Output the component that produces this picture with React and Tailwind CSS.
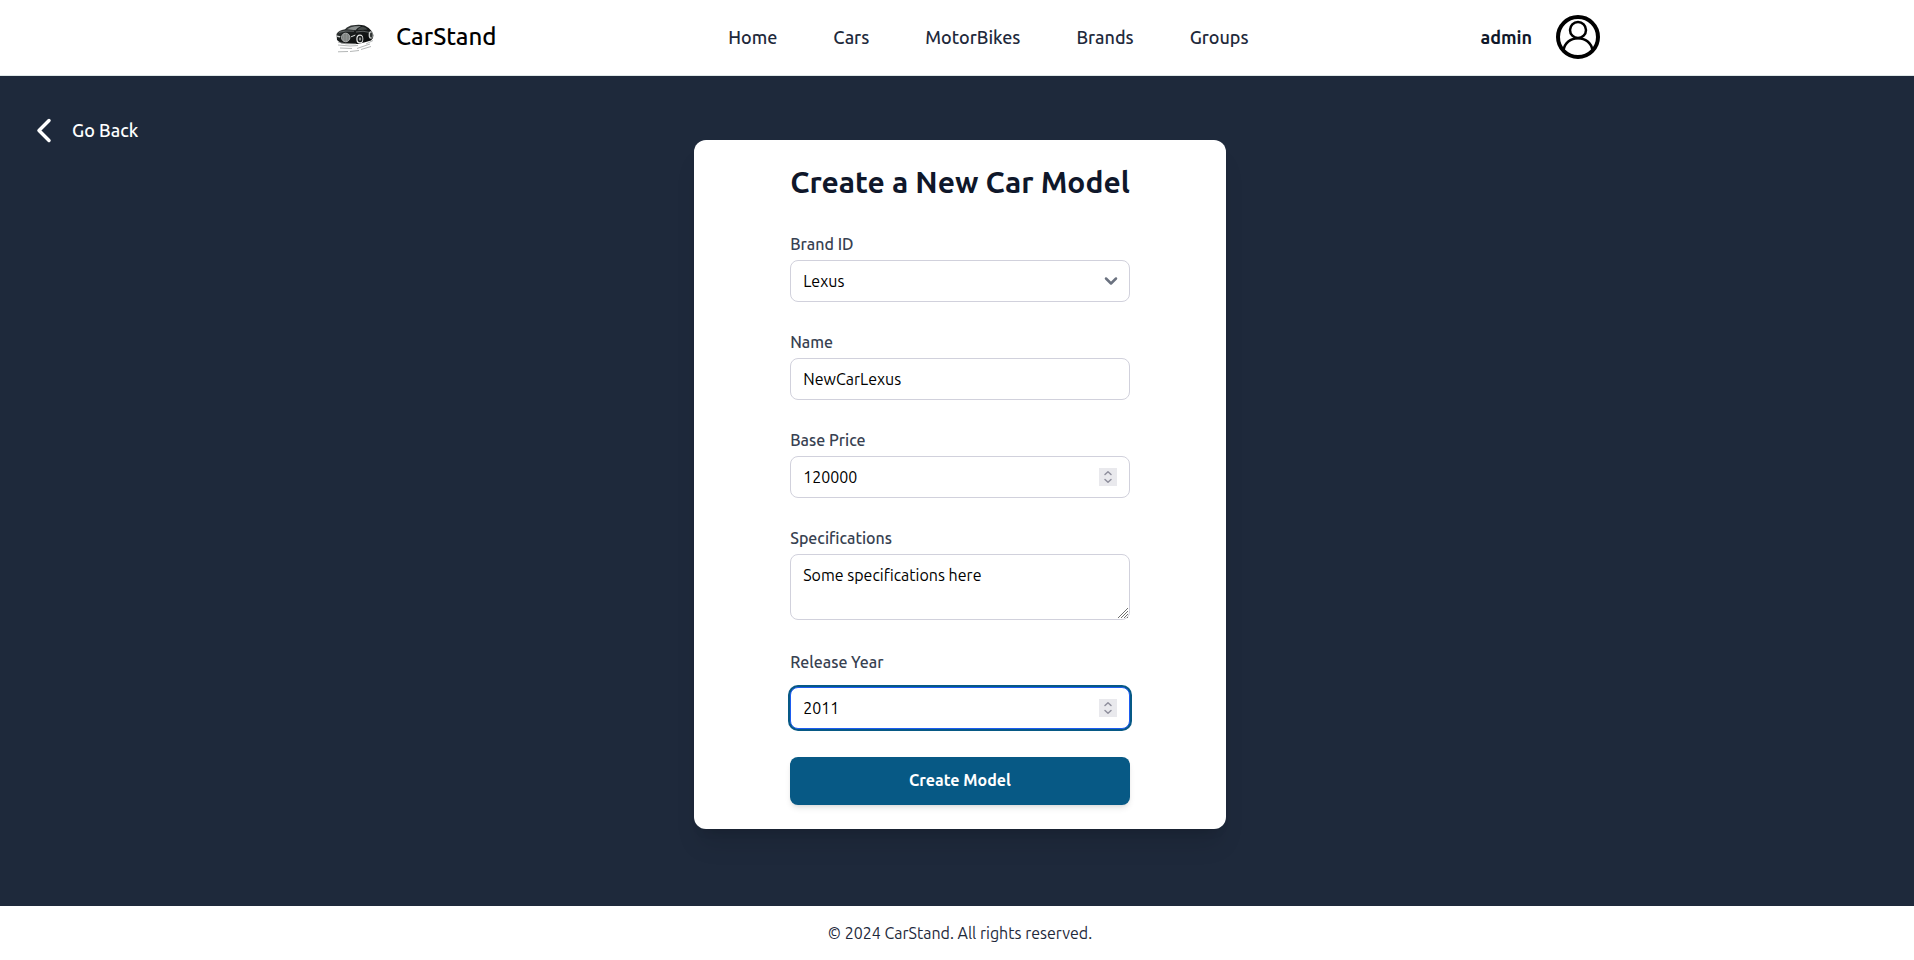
import { useState } from "react";

const NAV_LINKS = ["Home", "Cars", "MotorBikes", "Brands", "Groups"];
const BRANDS = ["Lexus", "Toyota", "BMW", "Audi"];

const fieldClass =
  "block w-full rounded-lg border border-[#d1d1dc] bg-white px-3 py-2 text-base text-black outline-none";
const focusedClass =
  "block w-full rounded-lg border border-[#1d5cf0] bg-white px-3 py-2 text-base text-black outline-none ring-2 ring-[#075985]";
const labelClass = "block text-base font-medium text-[#374151]";

function CarLogo() {
  return (
    <svg viewBox="0 0 50 42" className="h-[42px] w-[50px]" aria-hidden="true">
      <defs>
        <linearGradient id="body" x1="0" y1="0" x2="1" y2="1">
          <stop offset="0" stopColor="#5b605f" />
          <stop offset="0.35" stopColor="#1b1f1f" />
          <stop offset="1" stopColor="#050606" />
        </linearGradient>
      </defs>
      <path d="M8 29 L20 30 L28 29.500 M10 32 L22 32.500 M8 35.800 L18 35.500 M20 35.500 L29 34.500 M27 32.500 L40 28 M31 33.500 L41 30.500 M36 28 L43 24.500" stroke="#b4b7b7" strokeWidth="1" fill="none" />
      <path d="M6.500 18 Q8 14.500 15 13.200 Q18.500 9.500 23 9.200 Q30 8.200 34.500 9.600 Q39 11.500 42 15.500 Q44 18.500 43 22 L41 24.500 L34 26.500 L28 28 L11 27.200 L7 24 Z" fill="url(#body)" />
      <path d="M17 13.200 Q20.500 10.500 25 10.200 L31 10 Q27 12 25.500 14.200 Z" fill="#8b908f" />
      <path d="M27.500 14.200 Q29 11.200 33 10.800 Q36 11.500 37.500 13.600 Z" fill="#454a49" />
      <path d="M9 16.300 Q15 14.400 24 15.200 M26 16 Q33 14.300 40 16.500" stroke="#8f9493" strokeWidth="0.600" fill="none" />
      <path d="M7 19.500 L10.500 20.300 L10 21.500 L7.200 21 Z M21 20.300 L25.500 18.500 L25 19.800 L21.200 21.300 Z" fill="#d3d6d5" />
      <ellipse cx="15.700" cy="21.500" rx="4.200" ry="4.300" fill="#777b7a" stroke="#c8cac9" strokeWidth="0.800" />
      <path d="M13.500 18.500 V24.500 M15 18 V25.200 M16.500 18 V25.200 M18 18.500 V24.500" stroke="#a5a8a7" strokeWidth="0.500" />
      <ellipse cx="29.800" cy="23" rx="3.500" ry="4.500" fill="#eceeed" />
      <ellipse cx="30" cy="23" rx="2.500" ry="3.300" fill="#131616" />
      <ellipse cx="30" cy="23" rx="1.200" ry="1.800" fill="#8d9190" />
      <ellipse cx="40.800" cy="19" rx="2.200" ry="3.700" fill="#c9cccb" />
      <ellipse cx="41.300" cy="19" rx="1.400" ry="2.700" fill="#323635" />
      <path d="M8 26 Q15 28.800 26 27.800" stroke="#888c8b" strokeWidth="0.700" fill="none" />
    </svg>
  );
}

function Avatar() {
  return (
    <svg viewBox="0 0 44 44" className="size-11" fill="none" stroke="#000" aria-hidden="true">
      <circle cx="22" cy="22" r="20" strokeWidth="4" />
      <circle cx="22" cy="15" r="8" strokeWidth="2.500" />
      <path d="M7.500 35.500 C8.500 28 14.500 23.300 22 23.300 C29.500 23.300 35.500 28 36.500 35.500" strokeWidth="2.500" />
    </svg>
  );
}

function NumberField({ id, className, value, onChange }) {
  return (
    <div className="relative">
      <input
        id={id}
        type="number"
        value={value}
        onChange={onChange}
        className={`${className} [appearance:textfield] [&::-webkit-inner-spin-button]:appearance-none [&::-webkit-outer-spin-button]:appearance-none`}
      />
      <svg
        viewBox="0 0 18 18"
        className="pointer-events-none absolute right-[13px] top-3 size-[18px] bg-[#e9e9ed]"
        fill="none"
        stroke="#8f8f9d"
        strokeWidth="1.500"
        strokeLinecap="round"
        strokeLinejoin="round"
        aria-hidden="true"
      >
        <path d="M6 6.500 L9 3.800 L12 6.500 M6 11.500 L9 14.200 L12 11.500" />
      </svg>
    </div>
  );
}

export default function App() {
  const [brand, setBrand] = useState("Lexus");
  const [name, setName] = useState("NewCarLexus");
  const [price, setPrice] = useState("120000");
  const [specs, setSpecs] = useState("Some specifications here");
  const [year, setYear] = useState("2011");

  return (
    <div className="flex min-h-screen flex-col bg-white font-['Ubuntu','Noto_Sans',sans-serif] text-base">
      <header className="border-b border-[#dfe8e8] bg-white pl-1.5">
        <div className="mx-auto flex h-[75px] max-w-[1280px] items-center justify-between pb-0.5">
          <a href="#" className="flex items-center gap-4 pl-2.5 text-2xl font-medium text-black">
            <CarLogo />
            CarStand
          </a>
          <nav className="flex items-center gap-14">
            {NAV_LINKS.map((link) => (
              <a key={link} href="#" className="text-lg font-medium text-[#1e293b]">
                {link}
              </a>
            ))}
          </nav>
          <a href="#" className="flex items-center gap-6 text-lg font-semibold text-[#0f172a]">
            admin
            <Avatar />
          </a>
        </div>
      </header>

      <main className="relative flex flex-1 flex-col items-center bg-[#1e293b] py-16 pl-1.5">
        <button type="button" className="absolute left-8 top-10 flex items-center gap-4 text-lg font-medium text-white">
          <svg viewBox="0 0 24 28" className="h-7 w-6" fill="none" stroke="currentColor" strokeWidth="3.500" strokeLinecap="round" strokeLinejoin="round" aria-hidden="true">
            <path d="M17 4.500 L7 14.500 L17 24.500" />
          </svg>
          Go Back
        </button>

        <form
          className="flex w-fit flex-col rounded-xl bg-white px-24 py-6 shadow-xl"
          onSubmit={(e) => e.preventDefault()}
        >
          <h1 className="mb-8 text-center text-3xl font-semibold leading-9 text-[#0f172a]">Create a New Car Model</h1>

          <div className="flex flex-col gap-7">
            <div className="flex flex-col gap-1">
              <label htmlFor="brand" className={labelClass}>Brand ID</label>
              <div className="relative">
                <select id="brand" value={brand} onChange={(e) => setBrand(e.target.value)} className={`${fieldClass} appearance-none`}>
                  {BRANDS.map((b) => (
                    <option key={b}>{b}</option>
                  ))}
                </select>
                <svg viewBox="0 0 24 24" className="pointer-events-none absolute right-[7px] top-[9px] size-6" fill="none" stroke="#6b7280" strokeWidth="2.500" strokeLinecap="round" strokeLinejoin="round" aria-hidden="true">
                  <path d="M7 9.500 L12 14.500 L17 9.500" />
                </svg>
              </div>
            </div>

            <div className="flex flex-col gap-1">
              <label htmlFor="name" className={labelClass}>Name</label>
              <input id="name" type="text" value={name} onChange={(e) => setName(e.target.value)} className={fieldClass} />
            </div>

            <div className="flex flex-col gap-1">
              <label htmlFor="price" className={labelClass}>Base Price</label>
              <NumberField id="price" className={fieldClass} value={price} onChange={(e) => setPrice(e.target.value)} />
            </div>

            <div className="flex flex-col gap-1 pb-0.5">
              <label htmlFor="specs" className={labelClass}>Specifications</label>
              <div className="relative">
                <textarea id="specs" rows={2} value={specs} onChange={(e) => setSpecs(e.target.value)} className={`${fieldClass} resize-none`} />
                <svg viewBox="0 0 12 12" className="pointer-events-none absolute bottom-px right-px size-3" fill="none" stroke="#6f6f6f" strokeWidth="1" aria-hidden="true">
                  <path d="M1 11 L11 1 M4 11 L11 4 M7 11 L11 7 M10 11 L11 10" />
                </svg>
              </div>
            </div>

            <div className="flex flex-col gap-[13px]">
              <label htmlFor="year" className={labelClass}>Release Year</label>
              <NumberField id="year" className={focusedClass} value={year} onChange={(e) => setYear(e.target.value)} />
            </div>

            <button type="submit" className="h-12 rounded-lg bg-[#075985] pb-0.5 text-base font-semibold text-white shadow-md">
              Create Model
            </button>
          </div>
        </form>
      </main>

      <footer className="bg-white py-[15px] pl-1.5 text-center text-base text-[#1e293b]">
        © 2024 CarStand. All rights reserved.
      </footer>
    </div>
  );
}
